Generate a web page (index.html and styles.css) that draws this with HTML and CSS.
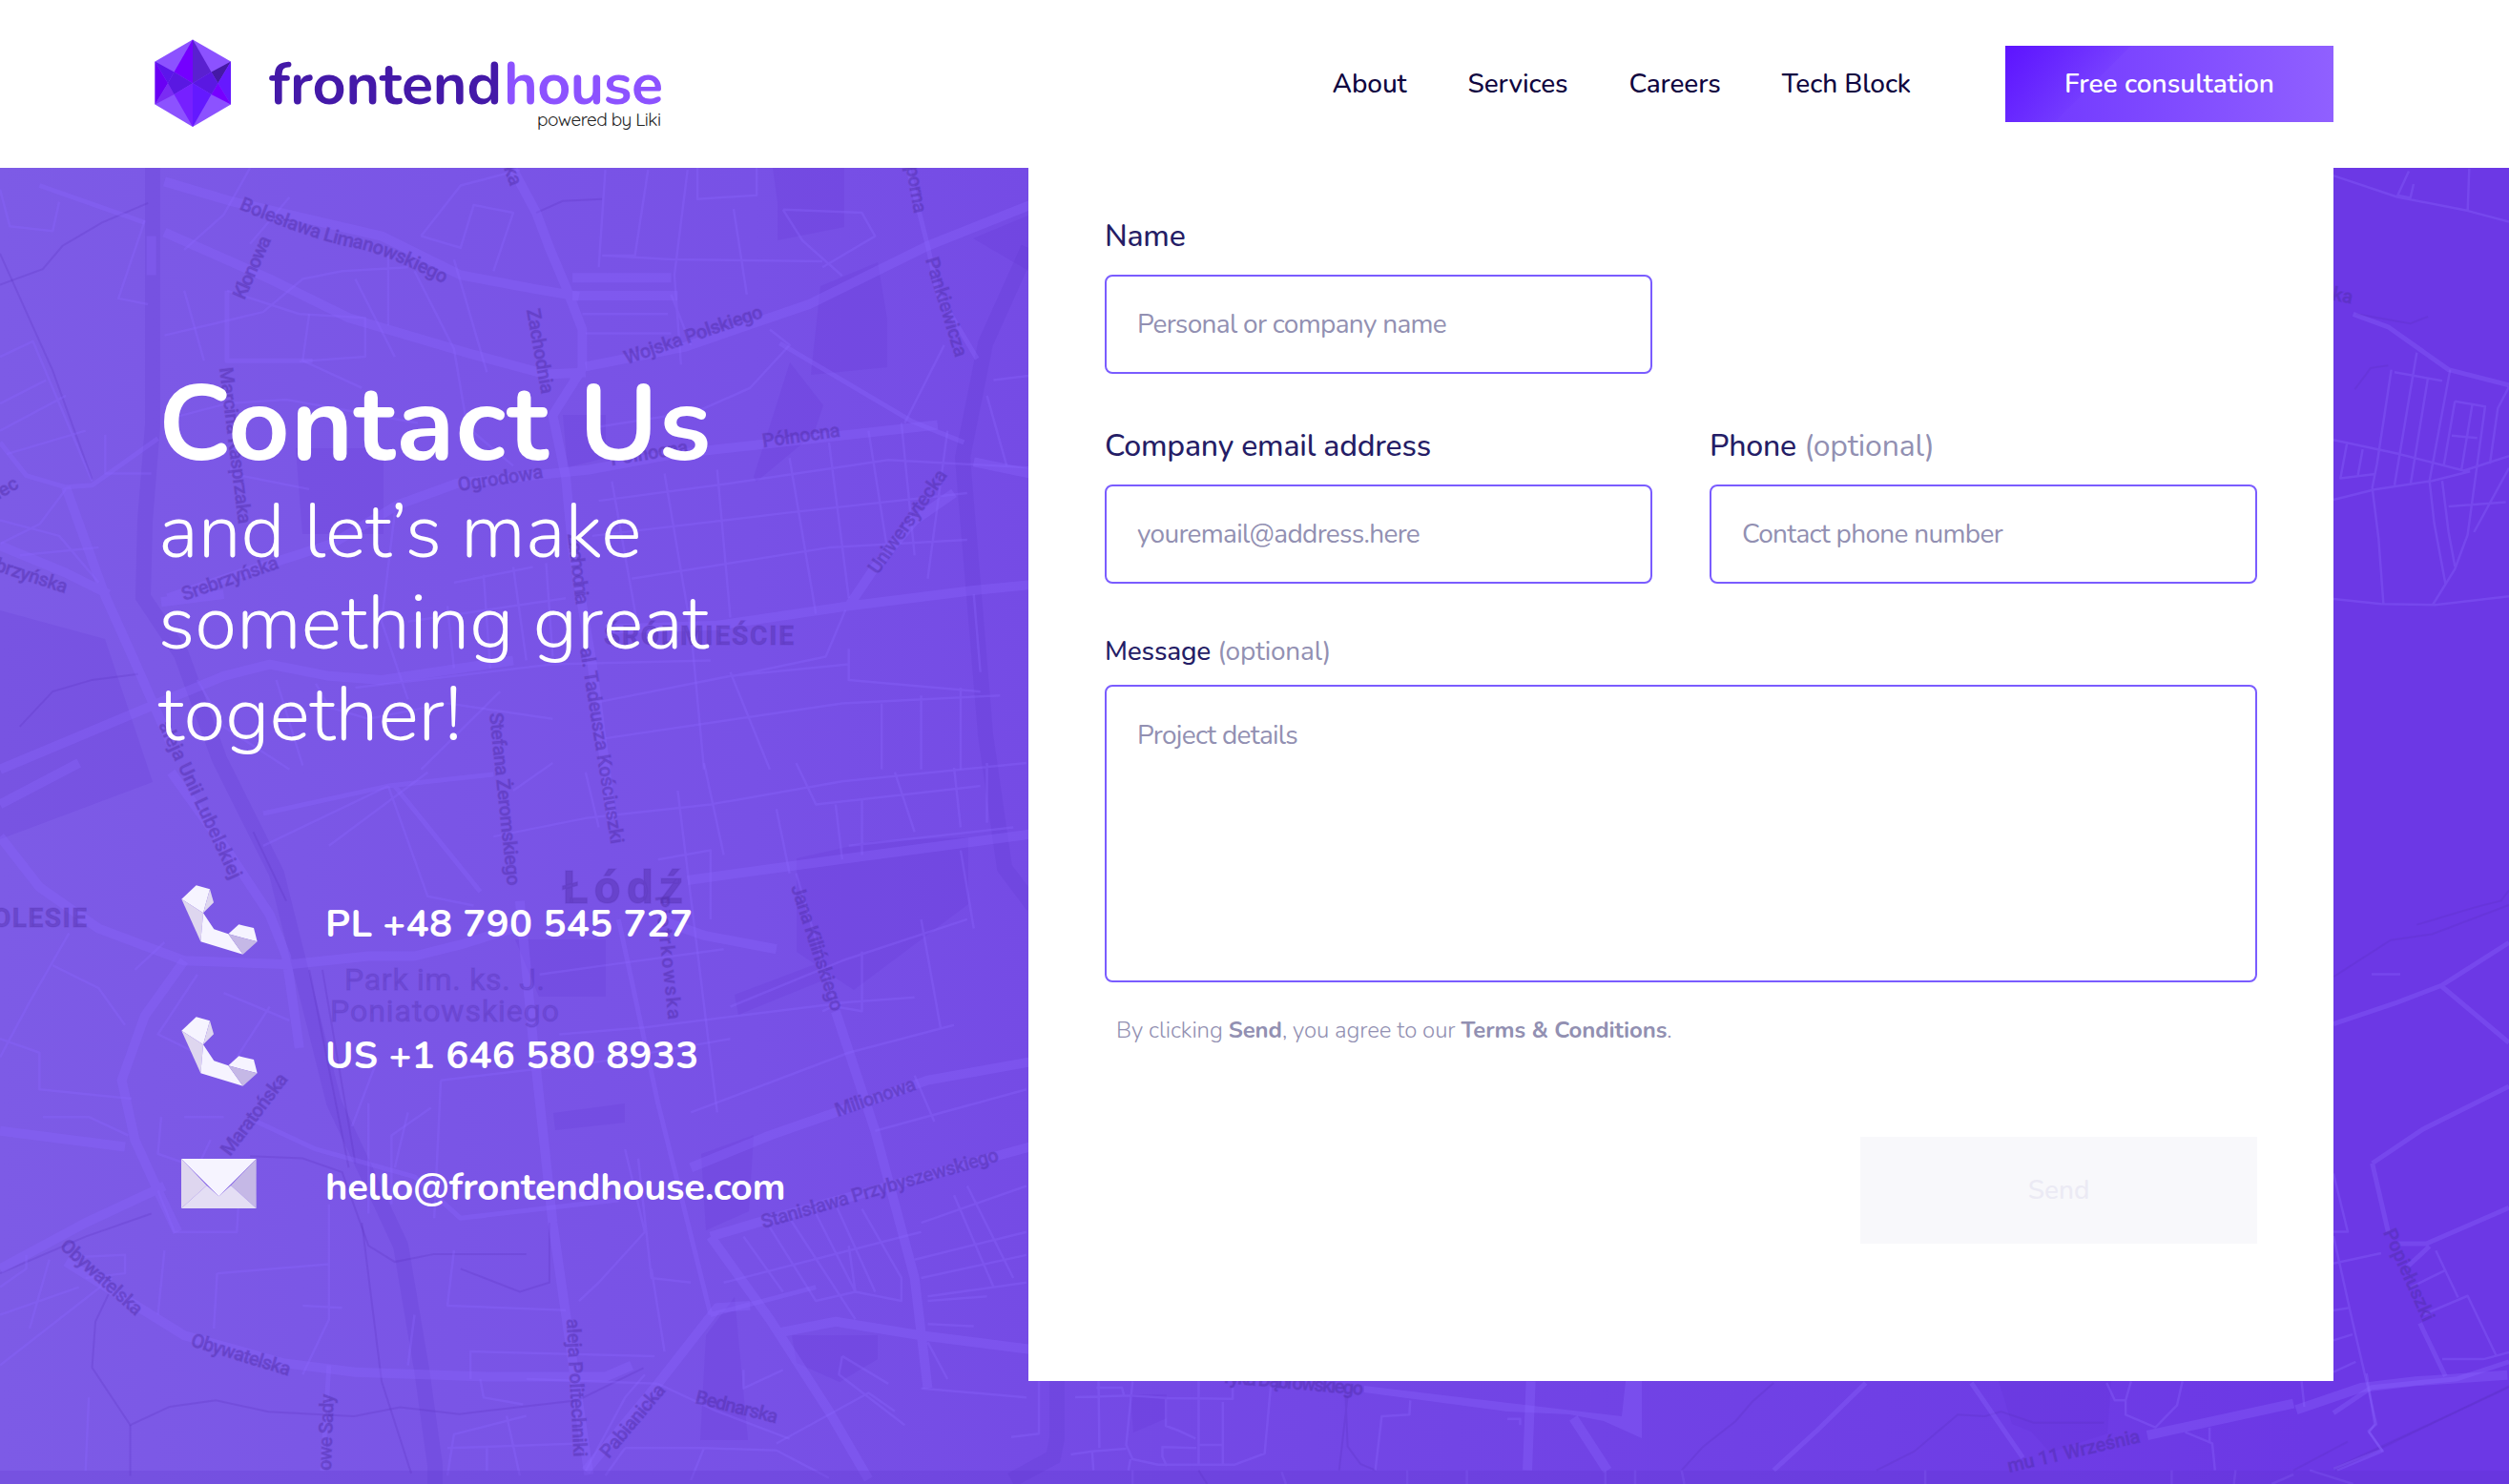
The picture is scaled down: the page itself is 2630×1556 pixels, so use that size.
FILE: index.html
```html
<!DOCTYPE html>
<html lang="en">
<head>
<meta charset="utf-8">
<title>Contact Us – frontendhouse</title>
<link rel="stylesheet" href="styles.css">
</head>
<body>
<header class="header">
  <a class="logo" href="#">
    <svg width="540" height="100" viewBox="160 38 540 100" role="img" aria-label="frontendhouse powered by Liki">
      <polygon fill="#8c52ff" points="202,41.5 242,64.5 242,109.5 202,133 162.500,109.500 162.500,64.500"/>
      <polygon fill="#5b16ea" points="162.500,64.500 182.500,75.500 176,87.300"/>
      <polygon fill="#6a00f4" points="162.500,64.500 176,87.300 162.500,109.500"/>
      <polygon fill="#7a2cf3" points="162.500,109.500 176,87.300 182.500,99"/>
      <polygon fill="#4519a6" points="242,64.500 221.500,75.500 228.500,87.300"/>
      <polygon fill="#6619ff" points="242,64.500 228.500,87.300 242,109.500"/>
      <polygon fill="#7600ff" points="242,109.500 228.500,87.300 221.500,99"/>
      <polygon fill="#7400ff" points="202,41.500 202,87.300 182.500,75.500"/>
      <polygon fill="#5a20d0" points="202,41.500 202,87.300 221.500,75.500"/>
      <polygon fill="#5a18e2" points="182.500,75.500 202,87.300 182.500,99 176,87.300"/>
      <polygon fill="#5a18e2" points="221.500,75.500 202,87.300 221.500,99 228.500,87.300"/>
      <polygon fill="#7620ff" points="202,133 202,87.300 182.500,99"/>
      <polygon fill="#6419ff" points="202,133 202,87.300 221.500,99"/>
      <text class="logo-word" x="282" y="109" textLength="244" fill="#4419a8">frontend</text>
      <text class="logo-word" x="528" y="109" textLength="167" fill="#8c52ff">house</text>
      <text class="logo-sub" x="563" y="132" textLength="130">powered by Liki</text>
    </svg>
  </a>
  <nav class="nav">
    <a href="#">About</a>
    <a href="#">Services</a>
    <a href="#">Careers</a>
    <a href="#">Tech Block</a>
  </nav>
  <a class="cta" href="#">Free consultation</a>
</header>
<main class="hero">
  <svg class="map" viewBox="0 176 2630 1380" preserveAspectRatio="none" aria-hidden="true">
    <g class="patch">
      <path d="M810 176h75v62l-70 14v-40z M860 300l60-25 10 60v50l-80 8z M790 500l38-120 35 45-10 30-60 50z M310 470h92v90h-85z M590 435h45v45l-40 10z M1020 250l60-25v60z M835 900l80-18 100-4v70l-120 90-60-40z M540 985h95v60h-70z M770 1043l90-34v20l-86 35z M580 1167l75-10v20l-73 8z M735 1210l55-20 -5 80-45 20z M740 1400l30-40 14 150h-50z M830 1400h90v25l-40 24-45-20z M0 640l110 30 50 150-160 60z"/>
      <path d="M2095 1448h118l-4 55-60 20-20-22-20-8z M1185 1462h38v25l-35 15z M2565 172h50l-50 5z"/>
    </g>
    <g class="rail">
      <path d="M160 176v270l-8 100-2 80 40 60 40 110 60 120 60 240 70 150 22 130 14 100v116"/>
      <path d="M1078 260l-45 100 -24 120 10 120 14 170 20 140 30 40"/>
      <path d="M1108 1448v60l-4 20-44 24"/>
    </g>
    <g class="stream" transform="translate(0 170) scale(.6897 .4082)">
      <path d="M0 315l65-40 30-60 60-60 70-50"/><path d="M0 235l80 300 60 280"/><path d="M30 1450l50-90 60-30 70-15"/><path d="M815 130l40-30 60-5"/>
    </g>
    <g class="stream" transform="translate(0 800) scale(.6897 .4821)">
      <path d="M380 855l80 5 60 30 40 160 40 35 60-17h140M700 1100l90 50 45-20v-130"/><path d="M165 1155l-20 60-5 100 58 125 60-40 70-14 80 25 130 10 70-20 90 15 180-30 100-70"/><path d="M198 1440v110M580 1345l45 200M550 1000l30 345"/>
      <path d="M470 450l60 430M490 450l50 420M385 150l50 150M0 1110l130-80 100-50"/>
    </g>
    <g class="stream" transform="translate(2400 150) scale(.3333 .8967)">
      <path d="M210 200l170 11 55-8M205 288l50-25 55-3M138 975l180-43 130-7 242-34M400 914l180-20 85-8 25-12M138 1550l552-95"/>
    </g>
    <g class="stream" transform="translate(1740 1440) scale(.5676 .3333)">
      <path d="M210 30l-40 60-30 60-60 80-40 75M400 305l70-60 80-115 50 5 30-15 60 35h130M1568 40l-320 265M1270 215l-100 90"/>
    </g>
    <g class="stream" transform="translate(1060 1440) scale(.4464 .3333)"><path d="M790 70l-20 235M785 70l5 160 30 55 35 20M440 305l20 43"/></g>

    <g class="road major" transform="translate(0 170) scale(.6897 .4082)">
      <path d="M250 50l100 50 230 90 120 100 110 35 70 20M250 180l160 120 120 100 180 90 120 55 60-5M780 20l35 110 20 90 25 100 25 110v100l-45 120 20 160 10 180 30 300 30 400"/>
      <path d="M870 297h150M870 343h160M890 525l150-50 190-110 180-150 156-105M100 835l60 280 40 150 60 230M0 1560L240 1390l100-70 70-30 90 30 80 10 200-50M0 985l100 70 65 55M255 1120l140-80 110-60 100-100 90-55 200-35 130-40 400-75M230 290v-100M245 1130l95-20"/>
      <path d="M920 1200l170-10 200-50 190-40 90-15M1290 1140l40-100 60-120 60-70M1480 770l86 30"/>
    </g>
    <g class="road mid" transform="translate(0 170) scale(.6897 .4082)">
      <path d="M1380 15l30 200 15 120 60 170M1185 465l200 200 80 55M60 60l160 95M345 330v180h130M240 710l-100 120-40 5-60-30L0 720"/>
    </g>
    <g class="road minor" transform="translate(0 170) scale(.6897 .4082)">
      <path d="M0 70l15 95 65 12 10-75M220 150l-40 200 45 15M380 15l-40 120-60 90M440 90l-60 120M250 445l150-60 60-85 60-20 100-10M345 330l110 60 100 10v100l-100 12M640 190l60-130 90-40M640 190l60 30 20-110 60 20-30 150M590 240v180M630 280l60 200 20 200 70 100M690 250l50 290"/>
      <path d="M920 20l-10 250M985 20l-20 220h-50M1045 20l-20 270 10 230M920 240l100 10 230 5M1060 15v80l90-10V15M1190 122l120 8 20 60-80 80M1190 122l30 80 60 90M885 390h130M890 440h130M1020 340l30 130M1115 120l20 220M1170 430l30 40-60 110-80 60-150 40M1435 470l-60 200"/>
      <path d="M540 300l60 200M470 390l-10 120 90 70M280 330l30 180M0 500l50-40 90 360M0 620l70-60M0 690l100-90M10 750l120-60M160 700v100h70M100 840l-40 90-60 50M0 920l90 40 60 120M30 1010l120-20M255 660l90-40 90-10 200 60M360 720l-10 80 120 40"/>
      <path d="M910 870l200-45 240-60 220 20M900 960l300-60 270-50M960 1070l300-80 210-20M930 820l40 380M1010 800l40 400 20 360M1090 790l20 380M1200 760l40 400M1260 720l30 400M1320 690l30 320M1370 670l20 340M1440 690l-30 380M1480 1110l10 200"/>
      <path d="M600 900l-20 280 40 200M690 1080l120-40M680 1140l10 160M735 1060l10 240M780 1040l20 240M830 1030l10 240M620 1180l240-60M540 1350l300-60 240-10M900 1390l210-70 180-30M920 1480l360-90 240-20M640 1560l120-200M1110 1310l60 250M1290 1250v80l200 30M1340 1390v170M1400 1370v190M1460 1350v210M1285 1150l-30 120-140 50M1510 560l56-12M1500 600l30 180"/>
      <path d="M300 1330l40 120 100 110M420 1330l40 220M480 1340l20 60 60 30 120-40 160 40"/>
    </g>

    <g class="road major" transform="translate(0 800) scale(.6897 .4821)">
      <path d="M260 20l90 180 60 130 25 90 20 200M0 160l60 110 90 90 130 70 160 8 120-18h70l70-25 90-40M1045 255l230-45 290-55M0 90L120 0"/>
      <path d="M280 430l-60 120-35 140 20 130 35 110 30 90M0 1100l130-100 120-80M0 800l190 35M100 1085l180 160 150 60 110 20 200 10h180l40-25M790 300l20 300 30 400 20 200 20 200 15 148"/>
      <path d="M890 1540l110-190 90-165 50-5M1080 1030l90 180 90 200 60 148M1080 1030l70-30 415-165M1050 880l120-70 240-120 156-40M1180 1240l90-25 130 30 165 30M1270 540l60 260 60 320 20 240M1010 345l60 30 110 30"/>
    </g>
    <g class="road mid" transform="translate(0 800) scale(.6897 .4821)">
      <path d="M390 780l90 60 150 60 70 90 240-40M940 340l60 400 80 460M600 50l130 230M400 110l190-60 160-25M500 1310l-10 230M1080 1200l160-60"/>
    </g>
    <g class="road minor" transform="translate(0 800) scale(.6897 .4821)">
      <path d="M105 370l-60 150-45 120M80 440l70 50 40 80M250 390l-45 60M0 600l60 30v80l140 20M65 770h70l60 40M245 770l-5 80 60 30 20-60M280 770h60M340 500l100 60M360 640l50-110M300 460l-60 130 100 70M240 930l25 90h95l5-120M130 1120l60-10v-40l-80 5M0 1140l40-40v-30M250 1060l-10 140M0 1200l120-60M0 1310l170-190M45 1230l30-150"/>
      <path d="M500 960v250l-40 120M330 1110l170-20M330 1110l-5 120M630 1200l-10 110M690 1060l-10 120 180 10M460 1180l60 5M135 1380l-5 160M715 1340v-60l280 10M730 1340l5 40 60 15M800 1340l200 10M800 1420l-110 40-10 90M680 1490l200-10M740 1540v-50M770 1420l20 130"/>
      <path d="M400 180l190-130M500 180l150-160M590 50l60 240 70 20M780 60l60-60M750 160l140-40 190-30 200-50 280-40M890 20l20 120M1000 210l80-20v150M1030 60l60 700M1070 0l30 200M1180 100l20 140M1210 0l30 90 250-40M1270 90l10 120M1310 80v120M1290 180l250-40M1360 20l30 130M1450 10l10 130M1500 0v130"/>
      <path d="M820 460l100-20 180-35M850 590l130-15 310-55 100-10M670 690l240-40 200-50M670 690l-10 300M655 750l-60 60v150M1050 760l240-130 160-60M1110 530l170-100 190-90M1210 240l60 290 40 10v-130M1280 520l-30 20M1460 190l20 170M1400 340l30 240M1330 800l230-90M1390 680l30 100M1390 1080l170-60M1400 1120l160-50M1410 1160l150-30M1400 1000l160-80M1470 920l70 200M1450 940l60 200"/>
      <path d="M950 840l30 180-70 110-30 40M970 860l20 260 60 10M990 1100l20 180M1130 1030l60 120M1170 1010l70 160 60-20-10-100M1200 990l100 220M1240 980l60 170 70 20v-50l-60-150M1270 960l60 190M1100 1130l300-110M1280 1290l70 60M1280 1290l-5 40 100 110M1180 1480l140-110 40 40M1130 1320v40l60-40M950 1490h120M950 1490l-30 60M1410 1170l90-10M1410 1220l70 5M1400 1360l160 20M1440 1340l-30-80M1050 1560l20-70 110 5 80 60"/>
      <path d="M890 1540l60-160 30-50M1000 1350l90 60 110 60M575 640l-40 150M560 740v240M620 760l-20 120"/>
    </g>

    <g class="road mid" transform="translate(2400 150) scale(.3333 .8967)">
      <path d="M200 200l110 15 190 50 190 18M138 1030l200-25 140-20 212-50M475 985l215 67M260 1193l160-40 270-50M260 1193l50 80M340 1287h90l260-42M370 1314l70-24M410 1380l80 62M138 1485l120-30 270-10 162-20"/>
    </g>
    <g class="road minor" transform="translate(2400 150) scale(.3333 .8967)">
      <path d="M138 38l200 25 220 16 132 13M375 33l-35 28 40 3 10-16M565 30l-5 50M138 347l200 16 210 20 142-17M138 417l130-12 180-10 120-11M320 265l-45 110-15 28 20 60 15 75M330 268l150 10M400 245l-70 155M435 275l-55 125M505 265l-65 130 15 50 35 70M480 395l20 60 20 40M520 302l95 6-55 150-40 40-70 42M520 302l-35 75M575 305l-35 78M510 342l80 3M690 285l-35 25-25 65M690 380l-110 75M500 425l180-5M180 352l-20 40 110-5M230 358l-15 30M138 533l150 6 170 1 232-10M258 972h90"/>
      <path d="M138 1205l45 68h-45M138 1310l150-12M138 1278l60 100 75 120-25 8 45 24M138 1365l50-3M138 1400l60-7M138 1437l70-12M460 1295l70 55M380 1338l110-20M420 1370l140-22 90 70M480 1422h130l80-8M138 1550l150-22"/>
    </g>
    <g class="road major" transform="translate(1740 1440) scale(.5676 .3333)">
      <path d="M900 195l270-100M1175 115l120-70 100-20 170-20"/>
    </g>
    <g class="road mid" transform="translate(1740 1440) scale(.5676 .3333)">
      <path d="M380 30l-90 150-80 125M575 30l95 235"/>
      <path class="thin" d="M825 30l15 55h20l10-60M860 85v45l55 40 40-70 10-75M1185 25l5 80M1305 0l15 160-10 25 25 60-85 60M970 185l50 35 5 85M1015 220v-50M45 348l-5-43M490 305v43M945 305v43M1060 348l3-43M1200 305l80 43M1130 348l40-30"/>
    </g>
    <path class="avenue" d="M1430 1453l270 32 4-37h17v60l-40-18-36-7-65-3-150-20z"/>
    <g class="road major" transform="translate(1060 1440) scale(.4464 .3333)"><path d="M1220 25l-8 280M1320 140l80 165"/></g>
    <g class="road minor" transform="translate(1060 1440) scale(.4464 .3333)">
      <path d="M65 25v165l-65 10M150 75l130-5 90 8 150 2V45M205 25l2 210M285 25l-15 200 15 45 60 17h180l70-35 15-220M440 25v260M497 90v200M200 45h60l5 25M363 80v85l30 15 40 25M440 225h55M435 235l-80-3v30l10 30M140 255l50-10 80-8M190 245l3 60M280 270l-5 35M855 305l15-170 65-5 2-45M285 305v43M635 310l10 38M930 305v43M1070 305v43M1395 305v43M1465 305v43M1165 143h30v20"/>
    </g>

    <g class="label">
      <path id="liman" fill="none" stroke="none" d="M250 219Q330 252 368 259T468 299"/>
      <text textLength="230"><textPath href="#liman">Bolesława Limanowskiego</textPath></text>
      <text transform="translate(256 315) rotate(-66)" textLength="70">Klonowa</text>
      <text transform="translate(552 325) rotate(80)" textLength="90">Zachodnia</text>
      <text transform="translate(657 382) rotate(-19)" textLength="152">Wojska Polskiego</text>
      <text transform="translate(800 469) rotate(-8)" textLength="82">Północna</text>
      <text transform="translate(641 488) rotate(-9)" textLength="82">Północna</text>
      <text transform="translate(481 515) rotate(-9)" textLength="90">Ogrodowa</text>
      <text transform="translate(193 630) rotate(-19)" textLength="106">Srebrzyńska</text>
      <text transform="translate(-6 598) rotate(18)" textLength="78">brzyńska</text>
      <text transform="translate(-2 524) rotate(-30)">lec</text>
      <text transform="translate(920 603) rotate(-55)" textLength="128">Uniwersytecka</text>
      <text transform="translate(970 272) rotate(73)" textLength="108">Pankiewicza</text>
      <text transform="translate(948 165) rotate(80)" textLength="60">aporna</text>
      <text transform="translate(528 176) rotate(70)">ka</text>
      <text transform="translate(230 386) rotate(83)" textLength="165">Marcina Kasprzaka</text>
      <text transform="translate(595 560) rotate(83)" textLength="75">Zachodnia</text>
      <text transform="translate(608 680) rotate(81)" textLength="208">al. Tadeusza Kościuszki</text>
      <text transform="translate(513 748) rotate(84)" textLength="182">Stefana Żeromskiego</text>
      <text transform="translate(166 760) rotate(65)" textLength="180">aleja Unii Lubelskiej</text>
      <text transform="translate(687 940) rotate(84)" textLength="130">Piotrkowska</text>
      <text transform="translate(829 930) rotate(72)" textLength="138">Jana Kilińskiego</text>
      <text transform="translate(878 1171) rotate(-19)" textLength="88">Milionowa</text>
      <text transform="translate(800 1288) rotate(-16)" textLength="258">Stanisława Przybyszewskiego</text>
      <text transform="translate(241 1213) rotate(-53)" textLength="102">Maratońska</text>
      <text transform="translate(62 1308) rotate(42)" textLength="108">Obywatelska</text>
      <text transform="translate(199 1411) rotate(17)" textLength="108">Obywatelska</text>
      <text transform="translate(347 1542) rotate(-88)" textLength="80">owe Sady</text>
      <text transform="translate(594 1383) rotate(87)" textLength="145">aleja Politechniki</text>
      <text transform="translate(638 1530) rotate(-50)" textLength="94">Pabianicka</text>
      <text transform="translate(728 1471) rotate(14)" textLength="88">Bednarska</text>
      <text transform="translate(1283 1450) rotate(5)" textLength="146">ryka Dąbrowskiego</text>
      <text transform="translate(2106 1544) rotate(-13)" textLength="142">mu 11 Września</text>
      <text transform="translate(2498 1292) rotate(66)" textLength="104">Popiełuszki</text>
      <text transform="translate(2434 312) rotate(12)">ska</text>
      <text class="district" x="633" y="676" textLength="199">ŚRÓDMIEŚCIE</text>
      <text class="district" x="-8" y="972" textLength="99">OLESIE</text>
      <text class="city" x="589" y="947" textLength="127">Łódź</text>
      <text class="park" x="361" y="1038" textLength="210">Park im. ks. J.</text>
      <text class="park" x="346" y="1071" textLength="240">Poniatowskiego</text>
    </g>
    <rect class="seam" x="0" y="1542" width="2630" height="14"/>
  </svg>

  <section class="intro">
    <h1 class="title">Contact Us</h1>
    <p class="lead">and let’s make<br>something great<br>together!</p>
    <ul class="contacts">
      <li><svg class="icon" width="80" height="74" viewBox="0 0 240 222"><use href="#phone"/></svg><a class="tel" href="#">PL +48 790 545 727</a></li>
      <li><svg class="icon" width="80" height="74" viewBox="0 0 240 222"><use href="#phone"/></svg><a class="tel" href="#">US +1 646 580 8933</a></li>
      <li><svg class="icon" width="80" height="52" viewBox="0 0 240 156">
        <path fill="#f6f4ff" d="M0 0h236L118 118z"/><path fill="#ded6ef" d="M0 0l80 84L0 156z"/><path fill="#c5b8e6" d="M236 0l-80 84 80 72z"/><path fill="#e4def4" d="M80 84l38 34 38-34 80 72H0z"/>
      </svg><a class="mail" href="#">hello@frontendhouse.com</a></li>
    </ul>
    <svg class="defs" width="0" height="0"><defs><g id="phone">
      <path fill="#f6f4ff" d="M1 44L47 1l43 12-21 75z"/><path fill="#ded6ef" d="M90 13l12 42-33 33z"/><path fill="#ded6ef" d="M1 44l68 44-8 90z"/><path fill="#f6f4ff" d="M69 88l34 51 45 15 46 64-133-40z"/><path fill="#f6f4ff" d="M148 154l33-30 47 11 11 43z"/><path fill="#c5b8e6" d="M148 154l91 24-45 40z"/>
    </g></defs></svg>
  </section>

  <form class="panel">
    <div class="field half">
      <label for="name">Name</label>
      <input id="name" placeholder="Personal or company name">
    </div>
    <div class="row">
      <div class="field">
        <label for="email">Company email address</label>
        <input id="email" placeholder="youremail@address.here">
      </div>
      <div class="field">
        <label for="phone-no">Phone <span>(optional)</span></label>
        <input id="phone-no" placeholder="Contact phone number">
      </div>
    </div>
    <div class="field message">
      <label for="msg">Message <span>(optional)</span></label>
      <textarea id="msg" placeholder="Project details"></textarea>
    </div>
    <p class="terms">By clicking <b>Send</b>, you agree to our <b>Terms &amp; Conditions</b>.</p>
    <button class="send" type="button" disabled>Send</button>
  </form>
</main>
</body>
</html>
```
FILE: styles.css
```css
* { box-sizing: border-box; }
body {
  margin: 0;
  font-family: Nunito, Lato, sans-serif;
  background: #fff;
}
a { color: inherit; text-decoration: none; }

.header {
  display: flex;
  align-items: center;
  height: 176px;
  padding: 0 184px 0 160px;
  color: #0f0540;
  font-size: 28px;
  font-weight: 600;
}
.logo { display: flex; margin-right: auto; }
.logo-word { font-size: 61px; font-weight: 700; }
.logo-sub { font: 400 19px Quicksand, Nunito, sans-serif; fill: #222; }
.nav { display: flex; gap: 64px; margin-right: 99px; font-weight: 550; letter-spacing: -.1px; }
.cta {
  width: 344px;
  line-height: 80px;
  text-align: center;
  color: #fff;
  background:
    linear-gradient(135deg, rgba(85, 5, 255, .7) 0, rgba(110, 50, 255, .25) 31%, transparent 31.200%),
    linear-gradient(90deg, #6f35ff, #9060ff);
}

.hero {
  position: relative;
  display: flex;
  justify-content: space-between;
  align-items: flex-start;
  height: 1380px;
  padding: 0 184px 0 166px;
  overflow: hidden;
  background: linear-gradient(90deg, #7d5be6 0, #7851e6 30%, #754be5 41%, #6f3fe5 75%, #6c38e5 92%);
}
.map { position: absolute; left: 0; top: 0; width: 2630px; height: 1380px; }
.map path { vector-effect: non-scaling-stroke; }
.patch { fill: rgba(90, 45, 205, .14); }
.road { fill: none; stroke: rgba(140, 103, 255, .32); stroke-linejoin: round; }
.avenue { fill: rgba(140, 103, 255, .32); }
.major path { stroke-width: 10px; }
.mid path { stroke-width: 5px; }
.minor path, .mid .thin { stroke-width: 2.500px; }
.stream { fill: none; stroke: rgba(85, 45, 185, .22); stroke-width: 2px; }
.rail { fill: none; stroke: rgba(95, 55, 205, .2); stroke-width: 16px; }
.label { font: 500 20px Roboto, sans-serif; fill: rgba(80, 45, 170, .42); }
.label text { stroke: rgba(80, 45, 170, .16); stroke-width: 1.500px; }
.district { font-size: 28px; font-weight: 700; }
.city { font-size: 49px; font-weight: 700; }
.park { font-size: 32px; font-weight: 400; fill: rgba(80, 45, 180, .3); }
.seam { fill: rgba(90, 50, 200, .2); }

.intro { position: relative; padding-top: 205px; color: #fff; }
.title { margin: 0; font-size: 112px; line-height: 129px; font-weight: 700; letter-spacing: 1px; }
.lead { margin: 0; font-size: 80px; line-height: 96px; font-weight: 300; }
.contacts { list-style: none; margin: 101px 0 0 24px; padding: 0; font-size: 40px; font-weight: 700; }
.contacts li { display: flex; align-items: center; gap: 71px; height: 138px; }
.contacts a { padding-top: 2px; }
.tel { letter-spacing: .3px; }
.mail { letter-spacing: -.27px; }
.icon { margin-bottom: 7px; }
.defs { display: block; }

.panel {
  position: relative;
  width: 1368px;
  height: 1272px;
  padding: 49px 80px 0;
  background: #fff;
  display: flex;
  flex-direction: column;
}
.row { display: grid; grid-template-columns: 1fr 1fr; gap: 60px; margin: 53px 0 52px; }
.field { display: flex; flex-direction: column; }
.half { width: 574px; }
.field label { font-size: 32px; line-height: 45px; margin-bottom: 18px; font-weight: 500; color: #251d66; letter-spacing: -.2px; }
.field label span { font-weight: 400; color: #9290b2; }
.message label { font-size: 28px; line-height: 38px; margin-bottom: 16px; }
input, textarea {
  display: block;
  width: 100%;
  height: 104px;
  padding: 0 32px;
  border: 2px solid #7a5cff;
  border-radius: 8px;
  background: #fff;
  font: 400 28px Nunito, Lato, sans-serif;
  letter-spacing: -.680px;
  outline: 0;
}
textarea { height: 312px; padding: 32px; resize: none; }
::placeholder { color: #9290b2; opacity: 1; }
.terms { margin: 34px 0 96px 12px; font-size: 24px; line-height: 32px; color: #9290b2; font-weight: 350; letter-spacing: -.1px; }
.send {
  align-self: flex-end;
  width: 416px;
  height: 112px;
  border: 0;
  background: #f8f8fb;
  color: #ebeaf4;
  font: 500 28px Nunito, Lato, sans-serif;
}
```
